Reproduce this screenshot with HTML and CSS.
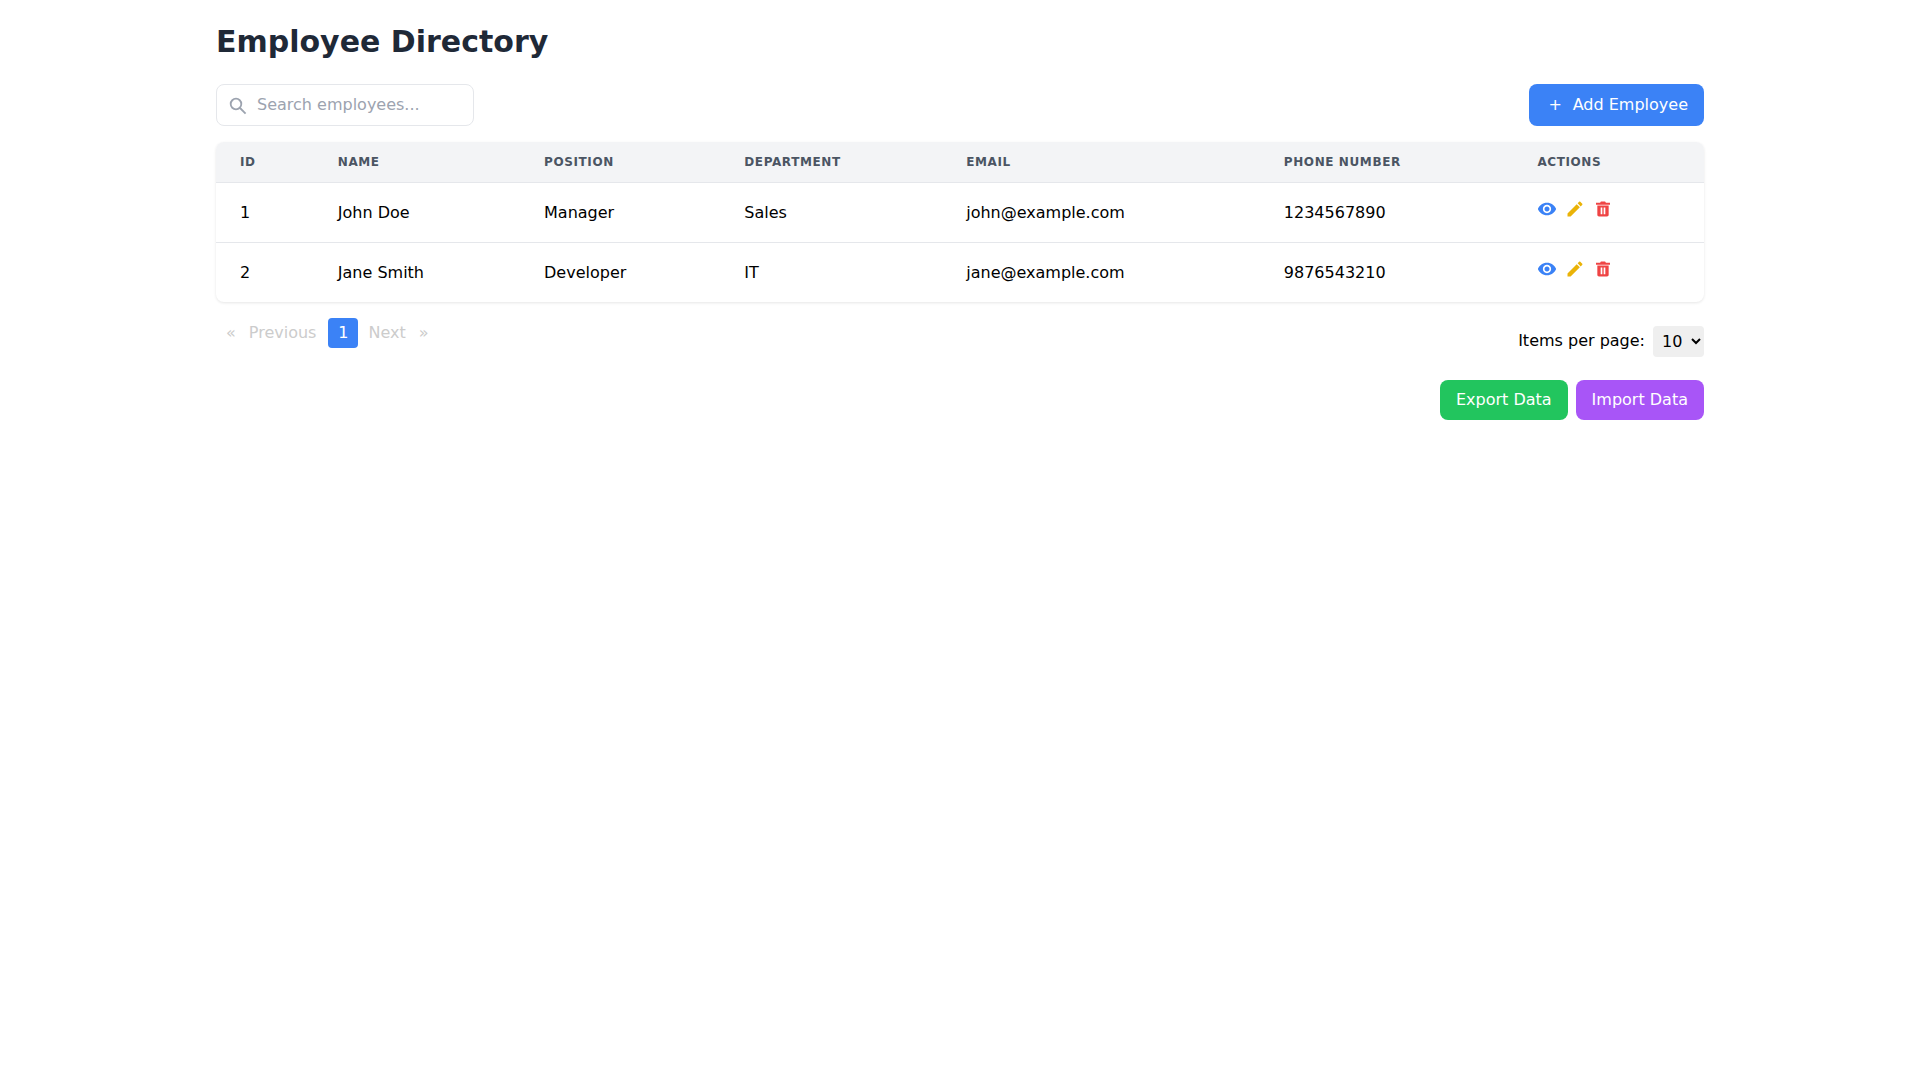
FILE: index.html
```html
<!DOCTYPE html>
<html lang="en">
<head>
<meta charset="utf-8">
<title>Employee Directory</title>
<link rel="stylesheet" href="styles.css">
</head>
<body>
<main class="container">
  <h1 class="title">Employee Directory</h1>
  <div class="toolbar">
    <div class="search">
      <svg class="search-icon" viewBox="0 0 20 20"><circle cx="8" cy="8" r="5.3"/><path d="M12 12l5.600 5.600"/></svg>
      <input class="search-input" type="text" placeholder="Search employees...">
    </div>
    <button class="btn btn-blue"><span class="plus">+</span>Add Employee</button>
  </div>
  <div class="table-card">
    <table class="table">
      <thead>
        <tr><th>ID</th><th>Name</th><th>Position</th><th>Department</th><th>Email</th><th>Phone Number</th><th>Actions</th></tr>
      </thead>
      <tbody>
        <tr>
          <td>1</td><td>John Doe</td><td>Manager</td><td>Sales</td><td>john@example.com</td><td>1234567890</td>
          <td><div class="actions">
            <svg class="icon eye" viewBox="0 0 24 24"><path d="M12 4.5C7 4.5 2.73 7.61 1 12c1.73 4.39 6 7.5 11 7.5s9.27-3.11 11-7.5c-1.73-4.39-6-7.5-11-7.5zM12 17c-2.76 0-5-2.24-5-5s2.24-5 5-5 5 2.24 5 5-2.24 5-5 5zm0-8c-1.66 0-3 1.34-3 3s1.34 3 3 3 3-1.34 3-3-1.34-3-3-3z"/></svg>
            <svg class="icon pencil" viewBox="0 0 24 24"><path d="M3 17.25V21h3.75L17.81 9.94l-3.75-3.75L3 17.25zM20.71 7.04c.39-.39.39-1.02 0-1.41l-2.34-2.34c-.39-.39-1.02-.39-1.41 0l-1.83 1.83 3.75 3.75 1.83-1.83z"/></svg>
            <svg class="icon trash" viewBox="0 0 24 24"><path fill-rule="evenodd" d="M9.500 3h5l1 1.500h4.900v2.300H3.600V4.500h4.900zM5.200 7.800h13.600V19c0 1.100-.9 2-2 2H7.200c-1.100 0-2-.9-2-2zm4 2.400v8h2v-8zm3.600 0v8h2v-8z"/></svg>
          </div></td>
        </tr>
        <tr>
          <td>2</td><td>Jane Smith</td><td>Developer</td><td>IT</td><td>jane@example.com</td><td>9876543210</td>
          <td><div class="actions">
            <svg class="icon eye" viewBox="0 0 24 24"><path d="M12 4.5C7 4.5 2.73 7.61 1 12c1.73 4.39 6 7.5 11 7.5s9.27-3.11 11-7.5c-1.73-4.39-6-7.5-11-7.5zM12 17c-2.76 0-5-2.24-5-5s2.24-5 5-5 5 2.24 5 5-2.24 5-5 5zm0-8c-1.66 0-3 1.34-3 3s1.34 3 3 3 3-1.34 3-3-1.34-3-3-3z"/></svg>
            <svg class="icon pencil" viewBox="0 0 24 24"><path d="M3 17.25V21h3.75L17.81 9.94l-3.75-3.75L3 17.25zM20.71 7.04c.39-.39.39-1.02 0-1.41l-2.34-2.34c-.39-.39-1.02-.39-1.41 0l-1.83 1.83 3.75 3.75 1.83-1.83z"/></svg>
            <svg class="icon trash" viewBox="0 0 24 24"><path fill-rule="evenodd" d="M9.500 3h5l1 1.500h4.900v2.300H3.600V4.500h4.900zM5.200 7.800h13.600V19c0 1.100-.9 2-2 2H7.200c-1.100 0-2-.9-2-2zm4 2.400v8h2v-8zm3.600 0v8h2v-8z"/></svg>
          </div></td>
        </tr>
      </tbody>
    </table>
  </div>
  <div class="pager-row">
    <nav class="pager">
      <span class="page-link page-first">«</span>
      <span class="page-link page-prev">Previous</span>
      <span class="page-current">1</span>
      <span class="page-link page-next">Next</span>
      <span class="page-link page-last">»</span>
    </nav>
    <div class="per-page">
      <label class="per-label" for="per">Items per page:</label>
      <select class="per-select" id="per"><option>10</option><option>25</option></select>
    </div>
  </div>
  <div class="footer-actions">
    <button class="btn btn-green">Export Data</button>
    <button class="btn btn-purple">Import Data</button>
  </div>
</main>
</body>
</html>
```

FILE: styles.css
```css
* { box-sizing: border-box; }
body {
  margin: 0;
  background: #fff;
  color: #000;
  font-family: "DejaVu Sans", sans-serif;
  font-size: 16px;
  line-height: 24px;
}
.container {
  max-width: 1536px;
  margin: 0 auto;
  padding: 24px;
}
.title {
  margin: 0 0 24px;
  font-size: 30px;
  line-height: 36px;
  font-weight: 700;
  color: #1f2937;
}
.toolbar {
  display: flex;
  justify-content: space-between;
  align-items: center;
  margin-bottom: 16px;
}
.search {
  position: relative;
  width: 258px;
  height: 42px;
}
.search-icon {
  position: absolute;
  left: 12px;
  top: 12px;
  width: 20px;
  height: 20px;
  fill: none;
  stroke: #9ca3af;
  stroke-width: 1.8;
}
.search-input {
  width: 100%;
  height: 100%;
  padding: 7px 16px 9px 40px;
  border: 1px solid #e5e7eb;
  border-radius: 8px;
  font: inherit;
  outline: none;
}
.search-input::placeholder { color: #9ca3af; opacity: 1; }
.btn {
  border: 0;
  border-radius: 8px;
  color: #fff;
  font: inherit;
  padding: 8px 16px;
  height: 40px;
}
.btn-blue {
  background: #3b82f6;
  height: 42px;
  display: flex;
  align-items: center;
}
.plus { margin: 0 9.5px 0 2.5px; width: 16px; text-align: center; }
.btn-green { background: #22c55e; }
.btn-purple { background: #a855f7; }
.table-card {
  border-radius: 8px;
  box-shadow: 0 1px 3px rgba(0,0,0,.1);
  overflow: hidden;
  margin-bottom: 16px;
}
.table {
  width: 100%;
  border-collapse: collapse;
}
.table th {
  padding: 12px 24px;
  background: #f3f4f6;
  color: #4b5563;
  font-size: 12px;
  line-height: 16px;
  font-weight: 700;
  letter-spacing: .05em;
  text-transform: uppercase;
  text-align: left;
  border-bottom: 1px solid #e5e7eb;
}
.table td {
  padding: 16px 24px;
  border-bottom: 1px solid #e5e7eb;
  vertical-align: middle;
}
.table tbody tr:last-child td { border-bottom: 0; }
.actions {
  display: flex;
  gap: 8px;
  height: 27px;
}
.icon { width: 20px; height: 20px; }
.eye { fill: #3b82f6; }
.pencil { fill: #eab308; }
.trash { fill: #ef4444; }
.pager-row {
  display: flex;
  justify-content: space-between;
  align-items: flex-start;
}
.pager {
  display: flex;
  align-items: center;
}
.page-link {
  height: 30px;
  line-height: 30px;
  color: #ccc;
}
.page-first { padding: 0 13px 0 10px; }
.page-prev { padding: 0 12px 0 0; }
.page-next { padding: 0 13px 0 10px; }
.page-last { padding: 0 10px 0 0; }
.page-current {
  width: 30px;
  height: 30px;
  line-height: 30px;
  text-align: center;
  border-radius: 4px;
  background: #3b82f6;
  color: #fff;
}
.per-page {
  display: flex;
  align-items: center;
  gap: 8px;
  margin-top: 8px;
}
.per-label { margin-top: -1px; }
.per-select {
  height: 31px;
  padding: 0 5px;
  border: 0;
  border-radius: 4px;
  background: #efefef;
  font: inherit;
}
.footer-actions {
  display: flex;
  justify-content: flex-end;
  gap: 8px;
  margin-top: 23px;
}
```
